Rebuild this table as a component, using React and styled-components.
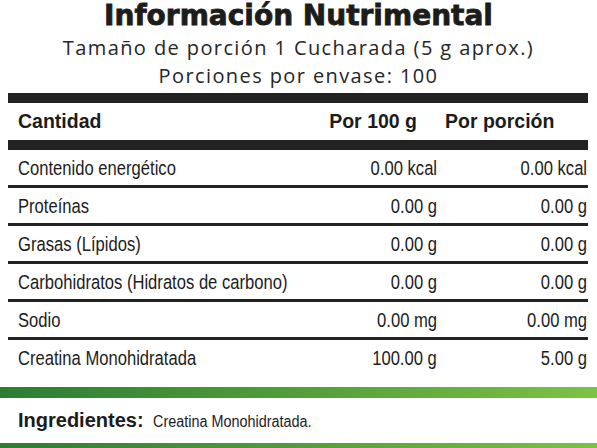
import React from "react";
import styled, { createGlobalStyle } from "styled-components";

const GlobalStyle = createGlobalStyle`
  html, body {
    margin: 0;
    padding: 0;
    background: #ffffff;
  }
  body {
    width: 597px;
    overflow: hidden;
  }
`;

const rows = [
  { name: "Contenido energético", per100: "0.00 kcal", perServing: "0.00 kcal" },
  { name: "Proteínas", per100: "0.00 g", perServing: "0.00 g" },
  { name: "Grasas (Lípidos)", per100: "0.00 g", perServing: "0.00 g" },
  { name: "Carbohidratos (Hidratos de carbono)", per100: "0.00 g", perServing: "0.00 g" },
  { name: "Sodio", per100: "0.00 mg", perServing: "0.00 mg" },
  { name: "Creatina Monohidratada", per100: "100.00 g", perServing: "5.00 g" },
];

export default function App() {
  return (
    <>
      <GlobalStyle />
      <Label>
        <Heading>
          <Title>Información Nutrimental</Title>
          <Sub>Tamaño de porción 1 Cucharada (5 g aprox.)</Sub>
          <Sub>Porciones por envase: 100</Sub>
        </Heading>

        <Table>
          <HeadRow>
            <HeadCell>Cantidad</HeadCell>
            <HeadCell align="right" pad="0 21px 0 0">
              Por 100 g
            </HeadCell>
            <HeadCell pad="0 0 0 7px">Por porción</HeadCell>
          </HeadRow>
          {rows.map((r, i) => (
            <Row key={r.name} last={i === rows.length - 1}>
              <Cell>
                <Narrow>{r.name}</Narrow>
              </Cell>
              <Cell align="right">
                <Narrow origin="right">{r.per100}</Narrow>
              </Cell>
              <Cell align="right">
                <Narrow origin="right">{r.perServing}</Narrow>
              </Cell>
            </Row>
          ))}
        </Table>

        <GreenBar />
        <Ingredients>
          <IngTitle>Ingredientes:</IngTitle>
          <IngText>Creatina Monohidratada.</IngText>
        </Ingredients>
        <GreenBar thin />
      </Label>
    </>
  );
}

const Label = styled.div`
  width: 597px;
  display: flex;
  flex-direction: column;
  color: #1c1c1b;
`;

const Heading = styled.div`
  display: flex;
  flex-direction: column;
  align-items: center;
  padding-bottom: 3px;
`;

const Title = styled.h1`
  margin: 0;
  font-family: "DejaVu Sans", sans-serif;
  font-weight: 700;
  font-size: 28px;
  line-height: 32px;
  -webkit-text-stroke: 0.8px #1c1c1b;
  color: #1c1c1b;
`;

const Sub = styled.div`
  font-family: "Open Sans", sans-serif;
  font-size: 20px;
  letter-spacing: 1.4px;
  line-height: 28px;
  color: #262626;
  &:first-of-type {
    margin-top: 2px;
  }
`;

const Table = styled.div`
  margin: 0 9px 0 8px;
  border-top: 10px solid #222222;
  font-family: "Liberation Sans", sans-serif;
`;

const columns = "minmax(0, 1fr) 140px 150px";

const HeadRow = styled.div`
  display: grid;
  grid-template-columns: ${columns};
  align-items: center;
  height: 37px;
  border-bottom: 10px solid #222222;
  padding-left: 10px;
`;

const HeadCell = styled.div`
  font-weight: 700;
  font-size: 19.5px;
  text-align: ${(p) => p.align || "left"};
  padding: ${(p) => p.pad || "0"};
`;

const Row = styled.div`
  display: grid;
  grid-template-columns: ${columns};
  align-items: center;
  height: ${(p) => (p.last ? "36px" : "35px")};
  margin-bottom: ${(p) => (p.last ? "11px" : "0")};
  padding: 0 1px 0 10px;
  border-bottom: ${(p) => (p.last ? "none" : "3px solid #222222")};
`;

const Cell = styled.div`
  font-size: 20.5px;
  text-align: ${(p) => p.align || "left"};
  white-space: nowrap;
  min-width: 0;
`;

const Narrow = styled.span`
  display: inline-block;
  transform: scaleX(${(p) => p.scale || 0.81});
  transform-origin: ${(p) => p.origin || "left"} center;
`;

const GreenBar = styled.div`
  height: ${(p) => (p.thin ? "8px" : "11px")};
  background: linear-gradient(90deg, #2c7d33 0%, #4f9a39 45%, #7cc243 100%);
`;

const Ingredients = styled.div`
  height: 45px;
  display: flex;
  align-items: center;
  padding-left: 18px;
  font-family: "Liberation Sans", sans-serif;
`;

const IngTitle = styled.span`
  font-weight: 700;
  font-size: 20px;
  margin-right: 9px;
`;

const IngText = styled(Narrow).attrs({ scale: 0.9 })`
  font-size: 16px;
  padding-top: 3px;
`;
